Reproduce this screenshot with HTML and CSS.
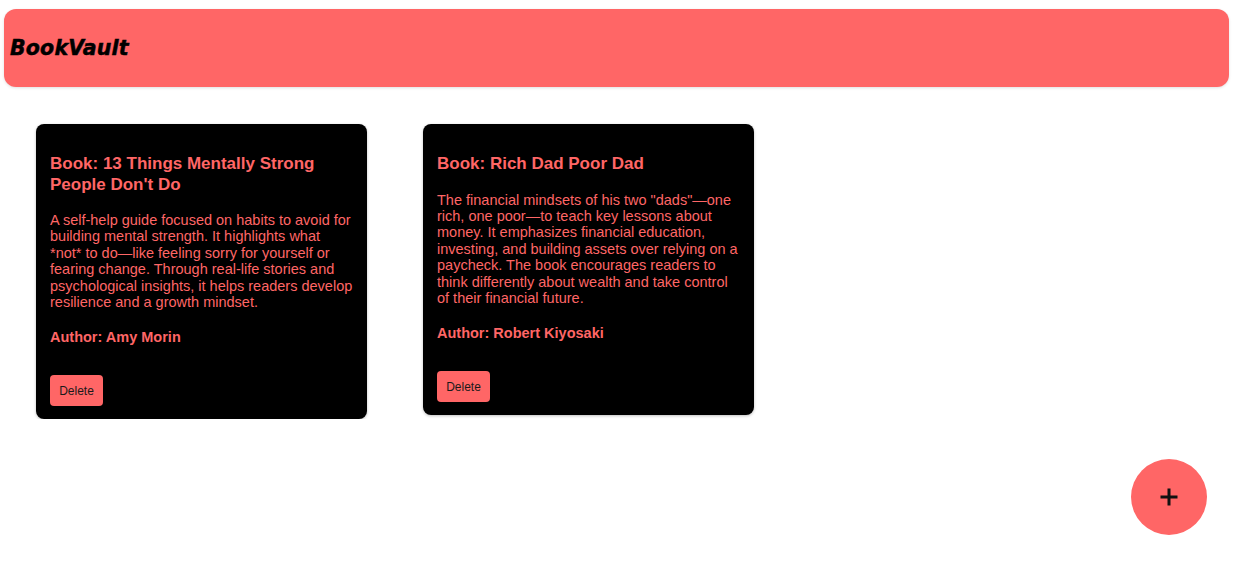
FILE: index.html
```html
<!DOCTYPE html>
<html lang="en">
<head>
<meta charset="utf-8">
<title>BookVault</title>
<link rel="stylesheet" href="styles.css">
</head>
<body>
<header class="topbar">
  <h1 class="brand">BookVault</h1>
</header>
<main class="books">
  <article class="card">
    <h3 class="card-title">Book: 13 Things Mentally Strong People Don't Do</h3>
    <p class="card-desc">A self-help guide focused on habits to avoid for building mental strength. It highlights what *not* to do—like feeling sorry for yourself or fearing change. Through real-life stories and psychological insights, it helps readers develop resilience and a growth mindset.</p>
    <p class="card-author">Author: Amy Morin</p>
    <button class="btn-delete" type="button">Delete</button>
  </article>
  <article class="card">
    <h3 class="card-title">Book: Rich Dad Poor Dad</h3>
    <p class="card-desc">The financial mindsets of his two "dads"—one rich, one poor—to teach key lessons about money. It emphasizes financial education, investing, and building assets over relying on a paycheck. The book encourages readers to think differently about wealth and take control of their financial future.</p>
    <p class="card-author">Author: Robert Kiyosaki</p>
    <button class="btn-delete" type="button">Delete</button>
  </article>
</main>
<button class="fab" type="button" aria-label="Add book">
  <svg width="20" height="20" viewBox="0 0 20 20" aria-hidden="true">
    <path d="M10 1.5V18.5M1.5 10H18.5" stroke="#111" stroke-width="3" fill="none"/>
  </svg>
</button>
</body>
</html>
```
FILE: styles.css
```css
* { box-sizing: border-box; }

body {
  margin: 0;
  background: #ffffff;
  font-family: "Liberation Sans", Arial, sans-serif;
}

.topbar {
  margin: 9px 5px 0 4px;
  height: 78px;
  background: #ff6666;
  border-radius: 12px;
  display: flex;
  align-items: center;
  padding: 0 6px;
  box-shadow: 0 1px 3px rgba(0, 0, 0, 0.12);
}

.brand {
  margin: 0;
  font-family: "DejaVu Sans", Verdana, sans-serif;
  font-weight: bold;
  font-style: italic;
  font-size: 20.5px;
  letter-spacing: 0.2px;
  -webkit-text-stroke: 0.5px #000;
  color: #000;
  line-height: 1;
}

.books {
  display: flex;
  align-items: flex-start;
  gap: 56px;
  padding: 37px 0 0 36px;
}

.card {
  width: 331px;
  background: #000;
  border-radius: 8px;
  padding: 30px 14px 13px;
  color: #ff6666;
  box-shadow: 0 1px 3px rgba(0, 0, 0, 0.25);
}

.card-title {
  margin: 0 0 17px;
  font-size: 17px;
  line-height: 20.5px;
  font-weight: bold;
}

.card-desc {
  margin: 0 0 18.5px;
  font-size: 14.5px;
  line-height: 16.4px;
}

.card-author {
  margin: 0 0 30px;
  font-size: 14.5px;
  line-height: 16.4px;
  font-weight: bold;
}

.btn-delete {
  display: block;
  width: 53px;
  height: 31px;
  padding: 0;
  border: none;
  border-radius: 4px;
  background: #ff6666;
  color: #1a1a1a;
  font-family: "Liberation Sans", Arial, sans-serif;
  font-size: 12px;
}

.fab {
  position: fixed;
  right: 27px;
  bottom: 28px;
  width: 76px;
  height: 76px;
  border: none;
  border-radius: 50%;
  background: #ff6666;
  display: flex;
  align-items: center;
  justify-content: center;
  padding: 0;
}

.fab svg { display: block; }
```
